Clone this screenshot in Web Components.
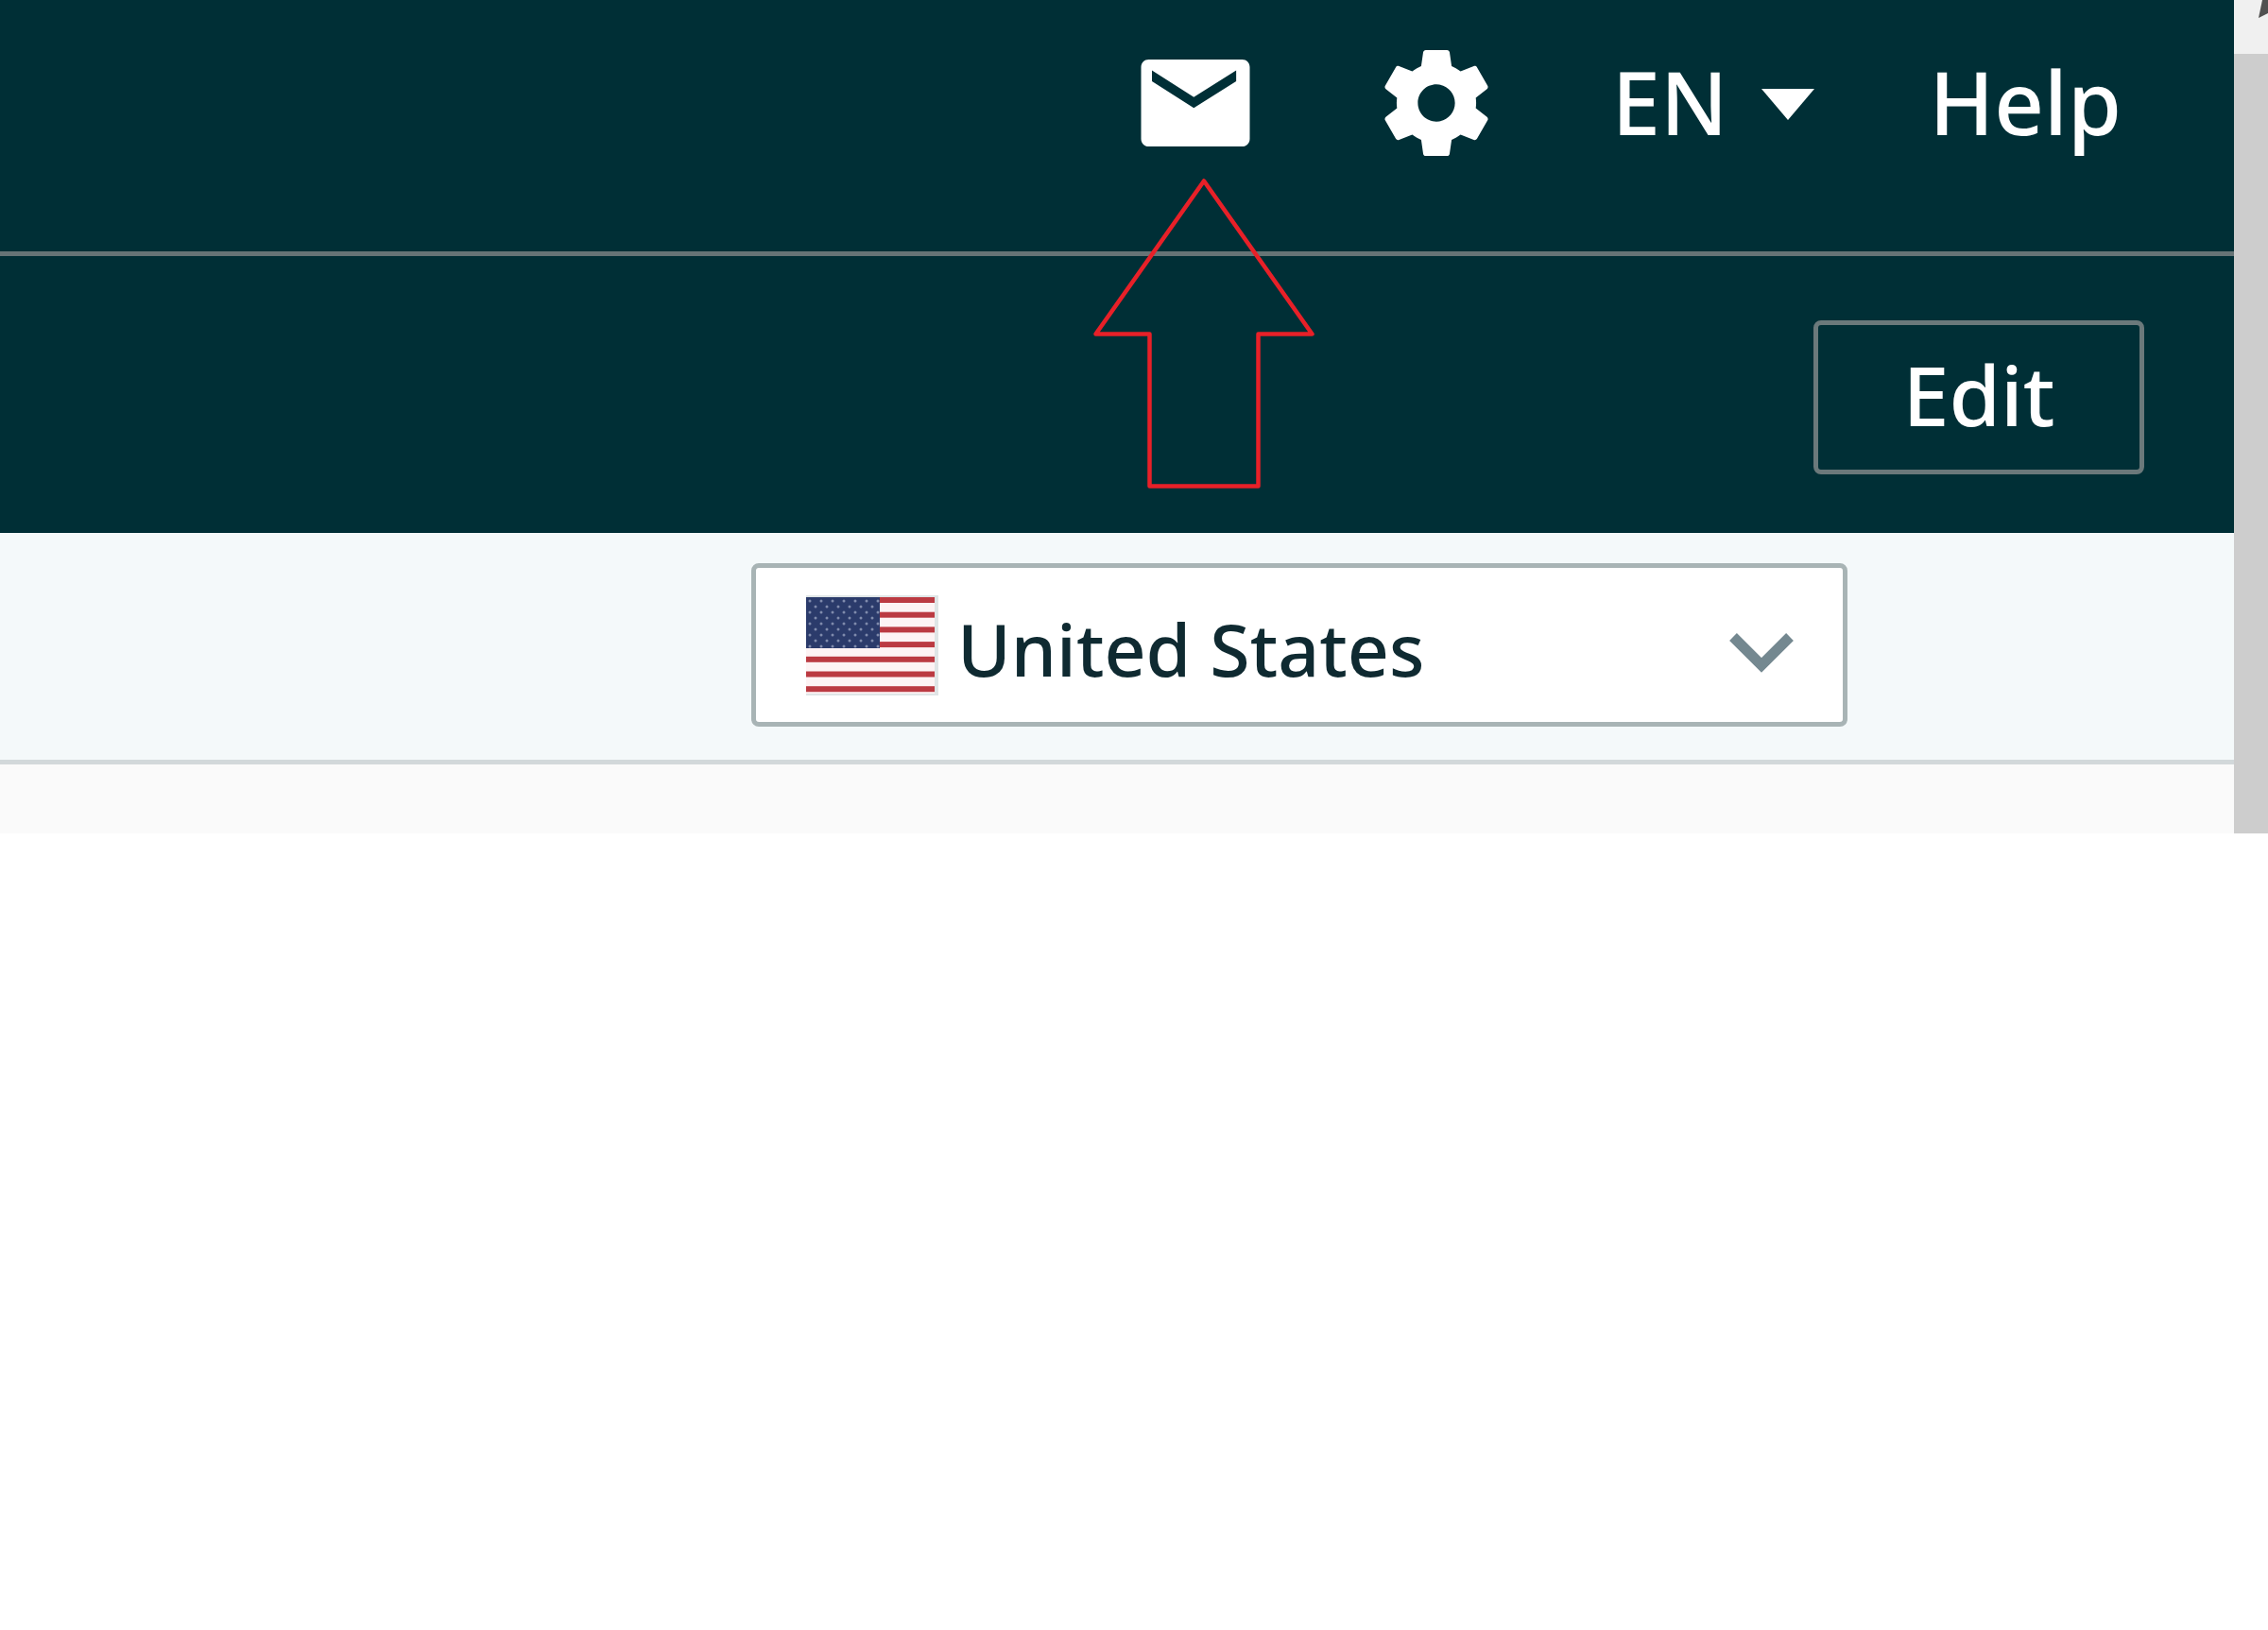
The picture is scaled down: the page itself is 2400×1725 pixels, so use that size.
<!DOCTYPE html>
<html lang="en">
<head>
<meta charset="utf-8">
<title>Seller dashboard</title>
<style>
  body {
    margin: 0;
    background: #fff;
    font-family: "Noto Sans", "Open Sans", sans-serif;
  }
</style>
</head>
<body>
<app-window>
  <top-nav></top-nav>
  <edit-bar><span>Edit</span></edit-bar>
  <market-bar></market-bar>
  <pointer-arrow slot="overlay"></pointer-arrow>
</app-window>

<script>
class AppWindow extends HTMLElement {
  constructor() {
    super();
    this.attachShadow({ mode: "open" });
  }

  connectedCallback() {
    this.shadowRoot.innerHTML = `
      <style>
        :host {
          display: grid;
          grid-template-columns: 1fr 36px;
          position: relative;
          overflow: hidden;
        }
        main {
          min-width: 0;
          background: #fafafa;
        }
        .content {
          height: 73px;
        }
      </style>
      <main>
        <slot></slot>
        <div class="content"></div>
      </main>
      <scroll-track></scroll-track>
      <slot name="overlay"></slot>
    `;
  }
}

class ScrollTrack extends HTMLElement {
  constructor() {
    super();
    this.attachShadow({ mode: "open" });
  }

  connectedCallback() {
    this.shadowRoot.innerHTML = `
      <style>
        :host {
          display: flex;
          flex-direction: column;
          overflow: hidden;
          background: #cdcdcd;
        }
        .up {
          height: 57px;
          background: #f0f0f0;
        }
        svg {
          display: block;
          width: 36px;
          height: 20px;
        }
      </style>
      <div class="up">
        <svg viewBox="0 0 36 20" aria-hidden="true">
          <path d="M26 19 L30 0 H36 V14 Z" fill="#505050"/>
        </svg>
      </div>
    `;
  }
}

class TopNav extends HTMLElement {
  constructor() {
    super();
    this.attachShadow({ mode: "open" });
  }

  connectedCallback() {
    this.shadowRoot.innerHTML = `
      <style>
        :host {
          display: block;
          background: #002f36;
          color: #fff;
          border-bottom: 5px solid #667476;
        }
        nav {
          display: flex;
          justify-content: flex-end;
          align-items: flex-start;
          gap: 117px;
          padding: 40px 119px 88px 0;
        }
        button {
          display: flex;
          align-items: center;
          gap: 32px;
          margin: 0;
          padding: 0;
          border: 0;
          background: none;
          color: inherit;
          font: inherit;
          cursor: pointer;
        }
        .text {
          font-size: 92px;
          font-weight: 500;
          line-height: 136px;
        }
        a {
          color: inherit;
          text-decoration: none;
        }
        svg {
          display: block;
          fill: currentColor;
        }
        .icon {
          width: 138px;
          height: 138px;
        }
        .caret {
          width: 64px;
          height: 48px;
        }
      </style>
      <nav>
        <button type="button" aria-label="Messages">
          <svg class="icon" viewBox="0 0 24 24">
            <path d="M20.6 4H3.4C2.6 4 2 4.6 2 5.4v13.2c0 .8.6 1.4 1.4 1.4h17.2c.8 0 1.4-.6 1.4-1.4V5.4C22 4.6 21.4 4 20.6 4zm-1.1 4l-7.8 4.9L4 8V6l7.7 4.9L19.5 6z"/>
          </svg>
        </button>
        <button type="button" aria-label="Settings">
          <svg class="icon" viewBox="-.3 -.3 24.6 24.6">
            <path d="M19.43 12.98c.04-.32.07-.64.07-.98s-.03-.66-.07-.98l2.11-1.65c.19-.15.24-.42.12-.64l-2-3.46c-.12-.22-.39-.3-.61-.22l-2.49 1c-.52-.4-1.08-.73-1.69-.98l-.38-2.65C14.46 2.18 14.25 2 14 2h-4c-.25 0-.46.18-.49.42l-.38 2.65c-.61.25-1.17.59-1.69.98l-2.49-1c-.23-.09-.49 0-.61.22l-2 3.46c-.13.22-.07.49.12.64l2.11 1.65c-.04.32-.07.65-.07.98s.03.66.07.98l-2.11 1.65c-.19.15-.24.42-.12.64l2 3.46c.12.22.39.3.61.22l2.49-1c.52.4 1.08.73 1.69.98l.38 2.65c.03.24.24.42.49.42h4c.25 0 .46-.18.49-.42l.38-2.65c.61-.25 1.17-.59 1.69-.98l2.49 1c.23.09.49 0 .61-.22l2-3.46c.12-.22.07-.49-.12-.64l-2.11-1.65zM12 15.5c-1.93 0-3.5-1.57-3.5-3.5s1.57-3.5 3.5-3.5 3.5 1.57 3.5 3.5-1.57 3.5-3.5 3.5z"/>
          </svg>
        </button>
        <button type="button" class="text" aria-haspopup="listbox">
          EN
          <svg class="caret" viewBox="0 0 64 48" aria-hidden="true">
            <path d="M4 10H60L32 43z"/>
          </svg>
        </button>
        <a class="text" href="#help">Help</a>
      </nav>
    `;
  }
}

class EditBar extends HTMLElement {
  constructor() {
    super();
    this.attachShadow({ mode: "open" });
  }

  connectedCallback() {
    this.shadowRoot.innerHTML = `
      <style>
        :host {
          display: flex;
          justify-content: flex-end;
          padding: 68px 95px 62px 0;
          background: #002f36;
        }
        button {
          box-sizing: border-box;
          min-width: 350px;
          height: 163px;
          padding: 0 0 8px;
          border: 5px solid #6b797b;
          border-radius: 8px;
          background: none;
          color: #fff;
          font: 500 88px/128px "Noto Sans", "Open Sans", sans-serif;
          cursor: pointer;
        }
      </style>
      <button type="button"><slot></slot></button>
    `;
  }
}

class MarketBar extends HTMLElement {
  constructor() {
    super();
    this.attachShadow({ mode: "open" });
  }

  connectedCallback() {
    this.shadowRoot.innerHTML = `
      <style>
        :host {
          display: flex;
          justify-content: flex-end;
          padding: 32px 409px 35px 0;
          background: #f4f9fa;
          border-bottom: 5px solid #d2d8da;
        }
        .picker {
          box-sizing: border-box;
          display: grid;
          grid-template-columns: 140px 1fr 72px;
          align-items: center;
          column-gap: 20px;
          width: 1160px;
          height: 173px;
          padding: 0 50px 0 53px;
          border: 5px solid #a8b4b5;
          border-radius: 8px;
          background: #fff;
        }
        select {
          appearance: none;
          width: 100%;
          margin: 0;
          padding: 8px 0 0;
          border: 0;
          background: none;
          color: #0f2a31;
          font: 500 77px/112px "Noto Sans", "Open Sans", sans-serif;
        }
        svg {
          display: block;
        }
      </style>
      <label class="picker">
        <market-flag></market-flag>
        <select aria-label="Marketplace">
          <option>United States</option>
        </select>
        <svg width="72" height="60" viewBox="0 0 72 60" aria-hidden="true">
          <path d="M6 21L36 51L66 21" fill="none" stroke="#748890" stroke-width="11"/>
        </svg>
      </label>
    `;
  }
}

class MarketFlag extends HTMLElement {
  constructor() {
    super();
    this.attachShadow({ mode: "open" });
  }

  // seven red stripes over a 136 x 102 field
  stripes() {
    let out = "";
    for (let i = 0; i < 7; i++) {
      out += `<rect y="${2 + i * 15.7}" width="136" height="6"/>`;
    }
    return out;
  }

  stars() {
    let out = "";
    for (let row = 0; row < 9; row++) {
      for (let x = row % 2 ? 10 : 4; x < 77; x += 12) {
        out += `<circle cx="${x}" cy="${6 + row * 6}" r="1.5"/>`;
      }
    }
    return out;
  }

  connectedCallback() {
    this.shadowRoot.innerHTML = `
      <style>
        :host {
          display: block;
        }
        svg {
          display: block;
          width: 140px;
          height: 106px;
        }
      </style>
      <svg viewBox="0 0 140 106" aria-hidden="true">
        <rect width="140" height="106" fill="#dfe5e6"/>
        <rect y="2" width="136" height="102" fill="#fdf3f4"/>
        <g fill="#bb3a42">${this.stripes()}</g>
        <rect y="2" width="78" height="54" fill="#2b3b6b"/>
        <g fill="#7f8bac">${this.stars()}</g>
      </svg>
    `;
  }
}

class PointerArrow extends HTMLElement {
  constructor() {
    super();
    this.attachShadow({ mode: "open" });
  }

  connectedCallback() {
    this.shadowRoot.innerHTML = `
      <style>
        :host {
          position: absolute;
          top: 186px;
          right: 1006px;
          pointer-events: none;
        }
        svg {
          display: block;
        }
      </style>
      <svg width="240" height="332" viewBox="0 0 240 332" aria-hidden="true">
        <path d="M120 5.5L234.5 167.5H177.5V328.5H62.5V167.5H5.5Z"
          fill="none" stroke="#e82028" stroke-width="4.5" stroke-linejoin="round"/>
      </svg>
    `;
  }
}

customElements.define("market-flag", MarketFlag);
customElements.define("scroll-track", ScrollTrack);
customElements.define("top-nav", TopNav);
customElements.define("edit-bar", EditBar);
customElements.define("market-bar", MarketBar);
customElements.define("pointer-arrow", PointerArrow);
customElements.define("app-window", AppWindow);
</script>
</body>
</html>
